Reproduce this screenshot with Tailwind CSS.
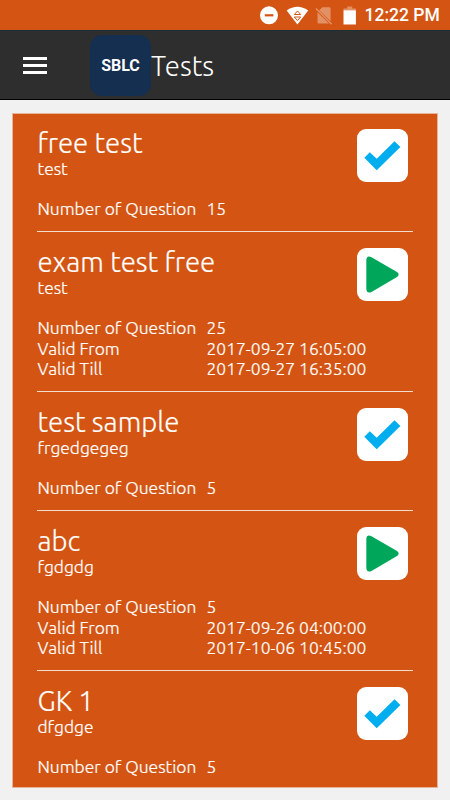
<!DOCTYPE html>
<html lang="en">
<head>
<meta charset="utf-8">
<title>Tests</title>
<script src="https://cdn.jsdelivr.net/npm/@tailwindcss/browser@4"></script>
</head>
<body class="w-[450px] h-[800px] overflow-hidden bg-[#f1f1f1] font-['Ubuntu','Noto_Sans','Open_Sans',sans-serif] text-white">
<svg class="hidden">
  <symbol id="check" viewBox="0 0 51 53"><path d="M7.3 28.7L12.8 23.2L19.7 29.7L37.5 12.2L43.4 17.9L19.7 41.3Z" fill="#00aeef"/></symbol>
  <symbol id="play" viewBox="0 0 51 53"><path d="M9.3 12Q9.8 7 14.5 9.2L40 24Q43.3 26.5 40 29L14.5 43.9Q9.8 46 9.3 41Z" fill="#00a75a"/></symbol>
</svg>
<header>
  <div class="h-[30px] bg-[#d45513] flex items-center pl-[260px]">
    <svg class="w-[18px] h-[19px]" viewBox="0 0 18 19"><circle cx="9" cy="9.3" r="9" fill="#fff"/><path d="M4.8 9.3h8.6" stroke="#d45513" stroke-width="2.2"/></svg>
    <svg class="w-[23px] h-[19px] ml-[8px]" viewBox="0 0 23 19"><path d="M.7 4.5Q11.4-3 22.2 4.5L11.4 18.5Z" fill="#fff"/><path d="M8.3 8.5L11.5 5L14.7 8.5ZM8.3 11L11.5 14.5L14.7 11Z" fill="none" stroke="#d45513" stroke-width="1"/></svg>
    <svg class="w-[18px] h-[19px] ml-[6px]" viewBox="0 0 18 19"><path d="M7.5 1.3h6.8q1.3 0 1.3 1.2v12.7L4.2 4.2ZM2.5 6.2L14 17.5H3.7Q2.5 17.5 2.5 16.2Z" fill="#fff" opacity=".35"/><path d="M1 2.5L16.7 18.2" stroke="#fff" stroke-width="1.4" opacity=".35"/></svg>
    <svg class="w-[14px] h-[19px] ml-[10px]" viewBox="0 0 14 19"><path d="M.5 2.5h3.7V.5h5v2h3.7v2H.5Z" fill="#fff" opacity=".35"/><path d="M.5 4.3h12.4v14.2H.5Z" fill="#fff"/></svg>
    <span class="ml-[7.5px] pt-[2px] font-['Roboto'] font-medium text-[17.5px] leading-none whitespace-nowrap">12:22 PM</span>
  </div>
  <div class="h-[70px] bg-[#2e2e2e] border-t border-t-[#183036] border-b border-b-black flex items-center">
    <div class="ml-[23px] w-6 h-[17px] flex flex-col justify-between"><i class="h-[3px] bg-white"></i><i class="h-[3px] bg-white"></i><i class="h-[3px] bg-white"></i></div>
    <div class="ml-[43px] w-[61px] h-[61px] rounded-[12px] bg-[#152f50] flex items-center justify-center font-['Roboto'] font-bold text-[16px] pt-[1px]">SBLC</div>
    <h1 class="ml-0 pt-[2px] font-light text-[27.6px] leading-none">Tests</h1>
  </div>
</header>
<main id="list" class="mt-[13px] ml-[12px] w-[426px] h-[675px] bg-[#d45513] border border-[#e5b49a]"></main>
<script>
const tests = [
  ['free test', 'test', '15', 'check'],
  ['exam test free', 'test', '25', 'play', '2017-09-27 16:05:00', '2017-09-27 16:35:00'],
  ['test sample', 'frgedgegeg', '5', 'check'],
  ['abc', 'fgdgdg', '5', 'play', '2017-09-26 04:00:00', '2017-10-06 10:45:00'],
  ['GK 1', 'dfgdge', '5', 'check'],
];
const row = (k, v) => `<dt>${k}</dt><dd>${v}</dd>`;
document.getElementById('list').innerHTML = tests.map(([title, sub, n, icon, from, till], i) => `
  <section class="ml-[24px] mr-[24px] ${from ? 'h-[160px]' : i ? 'h-[119px]' : 'h-[118px]'} ${i < 4 ? 'border-b border-[#f6dccd]' : ''} ${i ? 'pt-[13px]' : 'pt-[12px]'} whitespace-nowrap">
    <div class="flex justify-between pr-[5px] h-[72px]">
      <div class="pl-[0.5px]">
        <h2 class="font-light text-[27.6px] leading-[34px] [-webkit-text-stroke:0.2px_white]">${title}</h2>
        <p class="-mt-[2px] text-[17.4px] leading-[21px] font-light [-webkit-text-stroke:0.2px_white]">${sub}</p>
      </div>
      <div class="mt-[3px] w-[51px] h-[53px] rounded-[9px] bg-white"><svg class="w-[51px] h-[53px]"><use href="#${icon}"/></svg></div>
    </div>
    <dl class="pl-[0.5px] pt-[1px] grid grid-cols-[169px_auto] text-[17.45px] leading-[20.6px] font-light [-webkit-text-stroke:0.2px_white]">
      ${row('Number of Question', n)}${from ? row('Valid From', from) + row('Valid Till', till) : ''}
    </dl>
  </section>`).join('');
</script>
</body>
</html>
